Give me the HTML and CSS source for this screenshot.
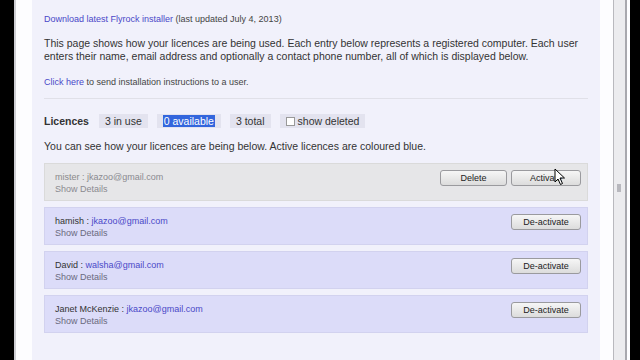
FILE: index.html
```html
<!DOCTYPE html>
<html>
<head>
    <meta charset="utf-8">
    <link rel="stylesheet" href="styles.css">
</head>
<body>
    <div class="window">
        <div class="page">
            <p class="small">
                <a href="#">Download latest Flyrock installer</a> (last updated July 4, 2013)
            </p>
            <p class="intro">
                This page shows how your licences are being used. Each entry below represents a registered computer. Each user
                enters their name, email address and optionally a contact phone number, all of which is displayed below.
            </p>
            <p class="small">
                <a href="#">Click here</a> to send installation instructions to a user.
            </p>

            <div class="licence-bar">
                <span class="title">Licences</span>
                <span class="pill">3 in use</span>
                <span class="pill"><span class="selected">0 available</span></span>
                <span class="pill">3 total</span>
                <span class="pill"><span class="check"></span>show deleted</span>
            </div>
            <p class="note">You can see how your licences are being below. Active licences are coloured blue.</p>

            <div class="licences">
                <div class="licence inactive">
                    <div class="info">
                        <div>mister : <a href="#">jkazoo@gmail.com</a></div>
                        <div class="details">Show Details</div>
                    </div>
                    <div class="actions">
                        <button class="btn wide">Delete</button>
                        <button class="btn">Activate</button>
                    </div>
                </div>
                <div class="licence">
                    <div class="info">
                        <div>hamish : <a href="#">jkazoo@gmail.com</a></div>
                        <div class="details">Show Details</div>
                    </div>
                    <div class="actions">
                        <button class="btn">De-activate</button>
                    </div>
                </div>
                <div class="licence">
                    <div class="info">
                        <div>David : <a href="#">walsha@gmail.com</a></div>
                        <div class="details">Show Details</div>
                    </div>
                    <div class="actions">
                        <button class="btn">De-activate</button>
                    </div>
                </div>
                <div class="licence">
                    <div class="info">
                        <div>Janet McKenzie : <a href="#">jkazoo@gmail.com</a></div>
                        <div class="details">Show Details</div>
                    </div>
                    <div class="actions">
                        <button class="btn">De-activate</button>
                    </div>
                </div>
            </div>
        </div>
        <div class="gap"></div>
        <div class="scrollbar"><div class="grip"></div></div>

        <svg class="cursor" width="12" height="18" viewBox="0 0 12 18">
            <path d="M1 1 L1 14 L4 11 L6.5 16.5 L8.5 15.5 L6 10 L10.5 10 Z" fill="#fff" stroke="#000" stroke-width="1"/>
        </svg>
    </div>
</body>
</html>
```

FILE: styles.css
```css
html,
body {
    margin: 0;
    height: 100%;
    background: #000;
    font-family: 'Liberation Sans', Arial, sans-serif;
    overflow: hidden;
}

.window {
    position: relative;
    display: flex;
    margin-left: 14px;
    width: 598px;
    height: 360px;
    padding-left: 16px;
    border-left: 2px solid #cfcfd4;
    background: #fdfdff;
}

.page {
    width: 544px;
    padding: 13px 12px 0 12px;
    background: #f1f1fb;
    color: #333;
}

.gap {
    width: 13px;
}

.scrollbar {
    position: relative;
    width: 11px;
    border-left: 1px solid #b9b9be;
    border-right: 2px solid #a8a8ae;
    background: #ececef;
}

.grip {
    position: absolute;
    top: 184px;
    left: 3px;
    width: 4px;
    height: 8px;
    background: #b8b8be;
}

p {
    margin: 0;
}

a {
    color: #4a48c8;
    text-decoration: none;
}

.small {
    font-size: 9px;
    line-height: 12px;
    color: #444;
}

.intro {
    margin: 12px 0 13px;
    font-size: 10.5px;
    line-height: 13px;
}

.licence-bar {
    display: flex;
    align-items: center;
    gap: 9px;
    margin-top: 10px;
    padding-top: 15px;
    border-top: 1px solid #e0e0e8;
    font-size: 10.5px;
}

.title {
    font-weight: bold;
    margin-right: 1px;
}

.pill {
    display: flex;
    align-items: center;
    height: 14px;
    padding: 0 6px;
    background: #e3e3ef;
    color: #333;
}

.selected {
    background: #3366dd;
    color: #fff;
    padding: 0 1px;
}

.check {
    display: inline-block;
    width: 7px;
    height: 7px;
    margin-right: 3px;
    border: 1px solid #999;
    background: #fff;
}

.note {
    margin: 12px 0 10px;
    font-size: 10.5px;
    line-height: 13px;
}

.licences {
    display: flex;
    flex-direction: column;
    gap: 6px;
}

.licence {
    display: flex;
    justify-content: space-between;
    align-items: flex-start;
    height: 36px;
    padding: 0 6px 0 10px;
    border: 1px solid #d2d2ef;
    background: #dcdcf9;
    font-size: 9px;
    line-height: 12px;
    color: #333;
}

.info {
    padding-top: 7px;
}

.details {
    color: #6a6a80;
}

.inactive {
    border-color: #dadada;
    background: #e6e6e8;
    color: #8a8a8a;
}

.inactive a,
.inactive .details {
    color: #8a8a90;
}

.actions {
    display: flex;
    gap: 4px;
    padding-top: 6px;
}

.btn {
    width: 70px;
    height: 16px;
    padding: 0;
    border: 1px solid #9a9a9e;
    border-radius: 3px;
    background: linear-gradient(#f6f6f6, #dcdcdc);
    font-family: 'Liberation Sans', Arial, sans-serif;
    font-size: 9px;
    color: #222;
}

.btn.wide {
    width: 67px;
}

.cursor {
    position: absolute;
    left: 538px;
    top: 168px;
}
```
